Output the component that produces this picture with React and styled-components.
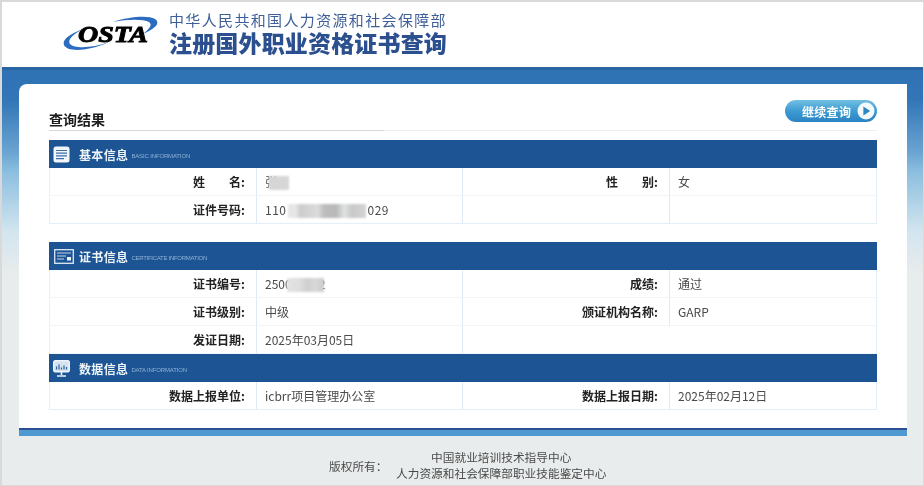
import React from "react";
import styled, { createGlobalStyle } from "styled-components";

const Global = createGlobalStyle`
  html, body { margin: 0; padding: 0; background: #fff; }
  body { font-family: "Noto Sans CJK SC", "Noto Sans", sans-serif; font-size: 12px; }
`;

const Frame = styled.div`
  box-sizing: border-box;
  width: 924px;
  height: 486px;
  border-style: solid;
  border-color: #d9d9d9;
  border-width: 2px 1px 1px 2px;
  display: flex;
  flex-direction: column;
  overflow: hidden;
  background: #e9ecec;
  filter: blur(0.3px);
`;

const Header = styled.header`
  height: 65px;
  flex: none;
  background: #fff;
  display: flex;
  align-items: flex-start;
  padding-left: 61px;
`;

const Logo = styled.svg`
  width: 100px;
  height: 40px;
  margin-top: 12px;
  flex: none;
  overflow: visible;
`;

const Brand = styled.div`
  margin-left: 6px;
  padding-top: 8px;
  display: flex;
  flex-direction: column;
`;

const Ministry = styled.div`
  font-size: 15px;
  line-height: 20px;
  letter-spacing: 1.35px;
  color: #3f5f99;
  white-space: nowrap;
`;

const SiteTitle = styled.h1`
  margin: 0;
  font-size: 23px;
  line-height: 24px;
  font-weight: 900;
  letter-spacing: 0.17px;
  color: #2c4f8f;
  white-space: nowrap;
`;

const Main = styled.main`
  flex: none;
  height: 369px;
  box-sizing: border-box;
  padding: 14px 16px 0 17px;
  border-top: 3px solid #2a65a3;
  background: linear-gradient(
    180deg,
    #2f72b4 0,
    #3276b7 30px,
    #6ba4d2 82px,
    #8cbfdf 102px,
    #d3e5ef 162px,
    #e9ecec 205px
  );
  display: flex;
  flex-direction: column;
`;

const Card = styled.section`
  background: #fff;
  border-top-left-radius: 8px;
  height: 344px;
  box-sizing: border-box;
  padding: 16px 30px 0 30px;
  flex: none;
`;

const BottomBar = styled.div`
  height: 6px;
  flex: none;
  border-top: 2px solid #2c4f96;
  background: #5099d0;
`;

const ResultBar = styled.div`
  height: 30px;
  display: flex;
  justify-content: space-between;
  align-items: flex-start;
  border-bottom: 1px solid #eceeef;
  margin-bottom: 9px;
`;

const ResultTitle = styled.h2`
  margin: 0;
  width: 335px;
  height: 31px;
  box-sizing: border-box;
  padding-top: 9px;
  border-bottom: 1px solid #d8d9da;
  font-size: 14px;
  line-height: 20px;
  font-weight: 700;
  color: #1c1c1c;
`;

const ContinueButton = styled.button`
  width: 92px;
  height: 22px;
  border: 0;
  border-radius: 11px;
  padding: 0 2px 0 17px;
  background: linear-gradient(180deg, #72c0e2 0, #3d9bd2 50%, #2b83c3 100%);
  display: flex;
  align-items: center;
  justify-content: space-between;
  color: #fff;
  font-family: inherit;
  font-size: 12px;
  font-weight: 700;
  letter-spacing: 0.3px;
  white-space: nowrap;
`;

const Tables = styled.div`
  width: 828px;
`;

const Section = styled.div`
  margin-bottom: ${(p) => p.$gap || 0}px;
`;

const SectionHead = styled.div`
  height: 28px;
  box-sizing: border-box;
  background: #1c5494;
  display: flex;
  align-items: center;
  color: #fff;
`;

const IconSlot = styled.div`
  width: 30px;
  flex: none;
  display: flex;
  padding-left: ${(p) => p.$pad || 4}px;
  box-sizing: border-box;
`;

const HeadTitle = styled.span`
  font-size: 12px;
  font-weight: 700;
  letter-spacing: 0.35px;
  color: #eef4fa;
`;

const HeadSub = styled.span`
  margin-left: 3px;
  margin-top: 4px;
  font-family: "Liberation Sans", sans-serif;
  font-size: 6px;
  letter-spacing: ${(p) => p.$track || -0.15}px;
  color: #8fb2d6;
  white-space: nowrap;
`;

const Row = styled.div`
  display: grid;
  grid-template-columns: 207px 206px 207px 208px;
  height: 28px;
  box-sizing: border-box;
  border-bottom: 1px solid ${(p) => (p.$last ? "#e4eef7" : "#f0f5fa")};
  border-left: 1px solid #e6eff8;
  border-right: 1px solid #e6eff8;
`;

const Label = styled.div`
  border-right: 1px solid #dfeaf5;
  text-align: right;
  padding-right: 11px;
  font-weight: 700;
  line-height: 27px;
  color: #222;
  white-space: pre;
`;

const Value = styled.div`
  border-right: ${(p) => (p.$end ? "0" : "1px solid #dfeaf5")};
  padding-left: 8px;
  line-height: 27px;
  color: #4a4a4a;
  white-space: nowrap;
  grid-column: span ${(p) => p.$span || 1};
`;

const Mask = styled.span`
  display: inline-block;
  position: relative;
  vertical-align: middle;
  height: 14px;
  margin-top: -2px;
  width: ${(p) => p.$w}px;
  margin-left: ${(p) => p.$ml || 0}px;
  margin-right: ${(p) => p.$mr || 0}px;
  background: ${(p) => p.$bg};
  filter: blur(0.8px);
`;

const WideDigits = styled.span`
  letter-spacing: 0.5px;
`;

const Footer = styled.footer`
  flex: 1;
  display: flex;
  align-items: center;
  justify-content: flex-start;
  padding-left: 327px;
  padding-top: 9px;
  font-size: 11.7px;
  color: #4a4a4a;
`;

const CopyLabel = styled.div`
  width: 67px;
  flex: none;
`;

const CopyOrgs = styled.div`
  text-align: center;
  line-height: 16px;
`;

const DocIcon = () => (
  <svg width="17" height="17" viewBox="0 0 17 17">
    <rect x="0.5" y="0.5" width="16" height="16" rx="2.5" fill="#f2f6fb" />
    <path d="M3 4.5h11M3 7.2h11M3 9.9h11M3 12.6h8" stroke="#3a6ea8" strokeWidth="1.2" />
  </svg>
);

const CertIcon = () => (
  <svg width="20" height="15" viewBox="0 0 20 15">
    <rect x="0.7" y="0.7" width="18.6" height="13.6" fill="none" stroke="#dfe9f4" strokeWidth="1.3" />
    <path d="M3 4h14M3 7h9M3 10h7" stroke="#c3d5e8" strokeWidth="1.1" />
    <rect x="13" y="8" width="4" height="3.5" fill="#eef4fa" />
  </svg>
);

const MonitorIcon = () => (
  <svg width="17" height="17" viewBox="0 0 17 17">
    <rect x="0.7" y="0.7" width="15.6" height="11" rx="1.5" fill="#d5e2f0" stroke="#eef4fa" strokeWidth="1.4" />
    <path d="M3.5 9.5v-3M6 9.5v-5M8.5 9.5v-2M11 9.5v-4M13.5 9.5v-2.5" stroke="#2a6099" strokeWidth="1.2" />
    <path d="M8.5 12v3M4 16h9" stroke="#eef4fa" strokeWidth="1.6" />
  </svg>
);

const PlayIcon = () => (
  <svg width="18" height="18" viewBox="0 0 18 18">
    <circle cx="9" cy="9" r="8.5" fill="#f4f9fc" />
    <path d="M6.4 4.6 13.2 9l-6.8 4.4z" fill="#2f86c4" />
  </svg>
);

const LogoMark = () => (
  <Logo viewBox="0 0 100 40">
    <path d="M20 15C6 20-1 26 1 31c3 7 23 7 45-3-16 6-34 7-39 2-3-4 3-10 13-15z" fill="#2c6cc0" />
    <path d="M50 8C65 3 85 1 92 5c6 4 0 10-12 15 6-5 10-9 6-12C80 5 65 5 50 8z" fill="#2c6cc0" />
    <text
      x="15"
      y="28"
      textLength="70"
      lengthAdjust="spacingAndGlyphs"
      fontFamily="'Liberation Serif', serif"
      fontWeight="700"
      fontStyle="italic"
      fontSize="23"
      fill="#000"
      stroke="#000"
      strokeWidth="0.9"
    >
      OSTA
    </text>
  </Logo>
);

const gray = "#d6d6d6";
const mosaicLong =
  "linear-gradient(90deg,#e6e6e6 0,#e6e6e6 10%,#cfcbcd 16%,#dcdcdc 38%,#bdbdbd 46%,#b8b8b8 62%,#e0e3e4 72%,#c8c8c8 82%,#d4d4d4 100%)";
const mosaicShort =
  "linear-gradient(90deg,#e4e4e4 0,#dddddd 35%,#cfcfcf 55%,#d8d8d8 75%,#cccccc 100%)";

export default function App() {
  return (
    <>
      <Global />
      <Frame>
        <Header>
          <LogoMark />
          <Brand>
            <Ministry>中华人民共和国人力资源和社会保障部</Ministry>
            <SiteTitle>注册国外职业资格证书查询</SiteTitle>
          </Brand>
        </Header>
        <Main>
          <Card>
            <ResultBar>
              <ResultTitle>查询结果</ResultTitle>
              <ContinueButton>
                继续查询
                <PlayIcon />
              </ContinueButton>
            </ResultBar>
            <Tables>
              <Section $gap={18}>
                <SectionHead>
                  <IconSlot><DocIcon /></IconSlot>
                  <HeadTitle>基本信息</HeadTitle>
                  <HeadSub>BASIC INFORMATION</HeadSub>
                </SectionHead>
                <Row>
                  <Label>姓　　名:</Label>
                  <Value>张<Mask $w={20} $ml={-8} $bg={gray} /></Value>
                  <Label>性　　别:</Label>
                  <Value $end>女</Value>
                </Row>
                <Row $last>
                  <Label>证件号码:</Label>
                  <Value>
                    <WideDigits>110</WideDigits>
                    <Mask $w={78} $ml={2} $mr={1} $bg={mosaicLong} />
                    <WideDigits>029</WideDigits>
                  </Value>
                  <Label />
                  <Value $end />
                </Row>
              </Section>
              <Section>
                <SectionHead>
                  <IconSlot $pad={5}><CertIcon /></IconSlot>
                  <HeadTitle>证书信息</HeadTitle>
                  <HeadSub $track={-0.28}>CERTIFICATE INFORMATION</HeadSub>
                </SectionHead>
                <Row>
                  <Label>证书编号:</Label>
                  <Value>2500<Mask $w={37} $ml={-5} $mr={-5} $bg={mosaicShort} />2</Value>
                  <Label>成绩:</Label>
                  <Value $end>通过</Value>
                </Row>
                <Row>
                  <Label>证书级别:</Label>
                  <Value>中级</Value>
                  <Label>颁证机构名称:</Label>
                  <Value $end>GARP</Value>
                </Row>
                <Row>
                  <Label>发证日期:</Label>
                  <Value>2025年03月05日</Value>
                  <Value $end $span={2} />
                </Row>
              </Section>
              <Section>
                <SectionHead>
                  <IconSlot><MonitorIcon /></IconSlot>
                  <HeadTitle>数据信息</HeadTitle>
                  <HeadSub>DATA INFORMATION</HeadSub>
                </SectionHead>
                <Row $last>
                  <Label>数据上报单位:</Label>
                  <Value>icbrr项目管理办公室</Value>
                  <Label>数据上报日期:</Label>
                  <Value $end>2025年02月12日</Value>
                </Row>
              </Section>
            </Tables>
          </Card>
          <BottomBar />
        </Main>
        <Footer>
          <CopyLabel>版权所有：</CopyLabel>
          <CopyOrgs>
            <div>中国就业培训技术指导中心</div>
            <div>人力资源和社会保障部职业技能鉴定中心</div>
          </CopyOrgs>
        </Footer>
      </Frame>
    </>
  );
}
